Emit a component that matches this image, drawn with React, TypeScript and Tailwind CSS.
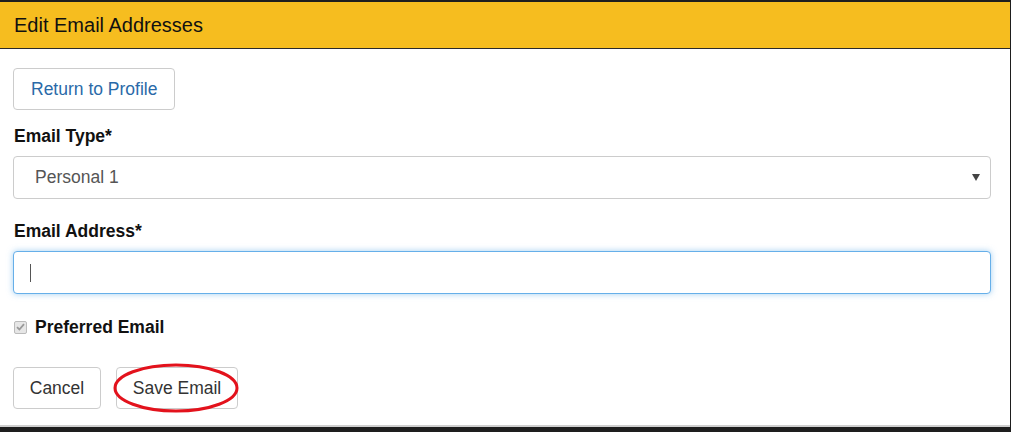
import React from "react";

export default function App() {
  return (
    <div className="w-[1011px] h-[432px] bg-[#1e1e1e] flex flex-col font-['Liberation_Sans',Arial,sans-serif] overflow-hidden">
      <div className="h-[2px] bg-[#1e1e1e] shrink-0" />
      <div className="h-[47px] shrink-0 bg-[#f6bd1f] border-b border-[#2a2a2a] flex items-center px-[14px] mr-[1px]">
        <span className="text-[20px] text-[#111] leading-none">Edit Email Addresses</span>
      </div>
      <div className="bg-white flex-1 flex flex-col px-[13px] pt-[19px] mr-[1px] border-b-2 border-[#cfcfcf]">
        <div>
          <button className="h-[42px] px-[17px] border border-[#ccc] rounded-[4px] bg-white text-[17.5px] text-[#2a6aa8]">
            Return to Profile
          </button>
        </div>
        <label className="mt-[14px] mb-[8px] text-[17.5px] leading-[24px] font-bold text-[#111] px-[1px]">Email Type*</label>
        <div className="relative h-[43px] w-[978px] border border-[#ccc] rounded-[4px] bg-white flex items-center pl-[21px] text-[17.5px] text-[#555]">
          Personal 1
          <svg className="absolute right-[10px] top-[17px]" width="8" height="7" viewBox="0 0 8 7">
            <polygon points="0,0 8,0 4,7" fill="#444" />
          </svg>
        </div>
        <label className="mt-[20px] mb-[8px] text-[17.5px] leading-[24px] font-bold text-[#111] px-[1px]">Email Address*</label>
        <div className="h-[43px] w-[978px] border border-[#66afe9] rounded-[4px] bg-white flex items-center pl-[16px] shadow-[0_0_6px_rgba(102,175,233,0.6)]">
          <div className="w-[1px] h-[18px] bg-[#555]" />
        </div>
        <div className="mt-[22px] h-[22px] flex items-center px-[1px]">
          <div className="w-[13px] h-[13px] border border-[#bbb] rounded-[2px] bg-[#e6e6e6] flex items-center justify-center">
            <svg width="9" height="8" viewBox="0 0 9 8">
              <path d="M1 4.2 L3.4 6.5 L8 1.2" stroke="#999" strokeWidth="1.8" fill="none" />
            </svg>
          </div>
          <span className="ml-[8px] text-[17.5px] font-bold text-[#111]">Preferred Email</span>
        </div>
        <div className="mt-[29px] flex gap-[15px]">
          <button className="h-[42px] w-[88px] border border-[#ccc] rounded-[4px] bg-white text-[17.5px] text-[#333]">
            Cancel
          </button>
          <div className="relative">
            <button className="h-[42px] w-[122px] border border-[#ccc] rounded-[4px] bg-white text-[17.5px] text-[#333]">
              Save Email
            </button>
            <svg className="absolute left-[-3px] top-[-5px]" width="128" height="52" viewBox="0 0 128 52">
              <ellipse cx="63" cy="26" rx="61" ry="23" fill="none" stroke="#e3121c" strokeWidth="3" />
            </svg>
          </div>
        </div>
      </div>
      <div className="h-[5px] shrink-0 bg-[#1e1e1e]" />
    </div>
  );
}
